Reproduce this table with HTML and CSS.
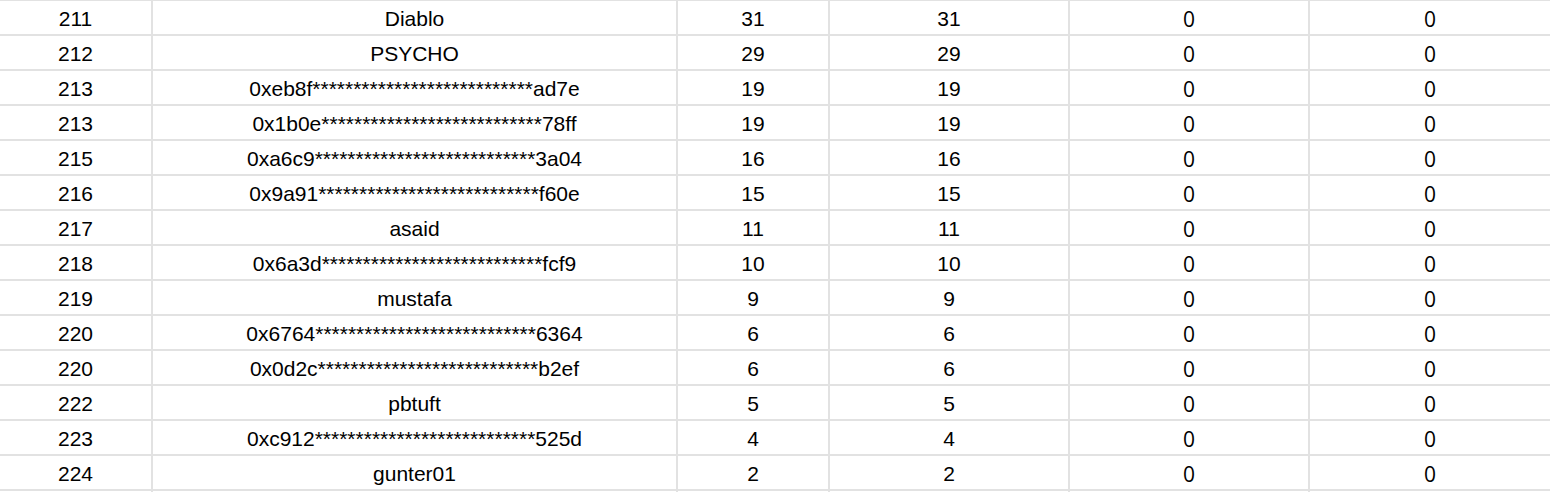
FILE: index.html
```html
<!DOCTYPE html>
<html>
<head>
<meta charset="utf-8">
<link rel="stylesheet" href="styles.css">
</head>
<body>
<div class="sheet">
  <div class="row"><div class="c">211</div><div class="c">Diablo</div><div class="c">31</div><div class="c">31</div><div class="c z">0</div><div class="c z">0</div></div>
  <div class="row"><div class="c">212</div><div class="c">PSYCHO</div><div class="c">29</div><div class="c">29</div><div class="c z">0</div><div class="c z">0</div></div>
  <div class="row"><div class="c">213</div><div class="c">0xeb8f***************************ad7e</div><div class="c">19</div><div class="c">19</div><div class="c z">0</div><div class="c z">0</div></div>
  <div class="row"><div class="c">213</div><div class="c">0x1b0e***************************78ff</div><div class="c">19</div><div class="c">19</div><div class="c z">0</div><div class="c z">0</div></div>
  <div class="row"><div class="c">215</div><div class="c">0xa6c9***************************3a04</div><div class="c">16</div><div class="c">16</div><div class="c z">0</div><div class="c z">0</div></div>
  <div class="row"><div class="c">216</div><div class="c">0x9a91***************************f60e</div><div class="c">15</div><div class="c">15</div><div class="c z">0</div><div class="c z">0</div></div>
  <div class="row"><div class="c">217</div><div class="c">asaid</div><div class="c">11</div><div class="c">11</div><div class="c z">0</div><div class="c z">0</div></div>
  <div class="row"><div class="c">218</div><div class="c">0x6a3d***************************fcf9</div><div class="c">10</div><div class="c">10</div><div class="c z">0</div><div class="c z">0</div></div>
  <div class="row"><div class="c">219</div><div class="c">mustafa</div><div class="c">9</div><div class="c">9</div><div class="c z">0</div><div class="c z">0</div></div>
  <div class="row"><div class="c">220</div><div class="c">0x6764***************************6364</div><div class="c">6</div><div class="c">6</div><div class="c z">0</div><div class="c z">0</div></div>
  <div class="row"><div class="c">220</div><div class="c">0x0d2c***************************b2ef</div><div class="c">6</div><div class="c">6</div><div class="c z">0</div><div class="c z">0</div></div>
  <div class="row"><div class="c">222</div><div class="c">pbtuft</div><div class="c">5</div><div class="c">5</div><div class="c z">0</div><div class="c z">0</div></div>
  <div class="row"><div class="c">223</div><div class="c">0xc912***************************525d</div><div class="c">4</div><div class="c">4</div><div class="c z">0</div><div class="c z">0</div></div>
  <div class="row"><div class="c">224</div><div class="c">gunter01</div><div class="c">2</div><div class="c">2</div><div class="c z">0</div><div class="c z">0</div></div>
  <div class="row"><div class="c"></div><div class="c"></div><div class="c"></div><div class="c"></div><div class="c z"></div><div class="c z"></div></div>
</div>
</body>
</html>
```
FILE: styles.css
```css
html, body {
  margin: 0;
  padding: 0;
  background: #ffffff;
  overflow: hidden;
}
.sheet {
  display: flex;
  flex-direction: column;
  margin: 0 0 0 -1px;
  font-family: "Liberation Sans", Arial, sans-serif;
  font-size: 21px;
  color: #000000;
}
.row {
  display: grid;
  grid-template-columns: 153px 525px 152px 240px 240px 242px;
  height: 35px;
}
.c {
  box-sizing: border-box;
  border: 1px solid #e2e2e2;
  display: flex;
  align-items: center;
  justify-content: center;
  white-space: nowrap;
  overflow: hidden;
  padding-top: 3px;
}
.z {
  font-family: "Open Sans", "Noto Sans", sans-serif;
  font-size: 21px;
}
```
